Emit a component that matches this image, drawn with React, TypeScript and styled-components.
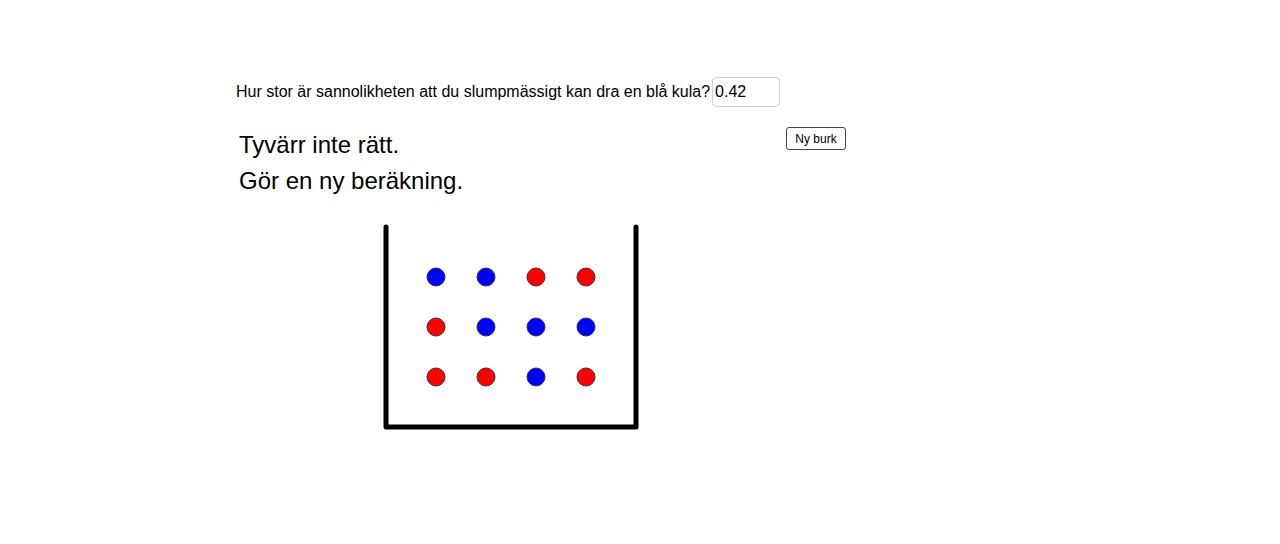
import React from 'react'
import styled, { createGlobalStyle } from 'styled-components'

const GlobalStyle = createGlobalStyle`
    html, body {
        margin: 0;
        padding: 0;
        background: white;
        font-family: "Liberation Sans", Arial, sans-serif;
    }
`

type Ball = 'blue' | 'red'

const balls: Ball[][] = [
    ['blue', 'blue', 'red', 'red'],
    ['red', 'blue', 'blue', 'blue'],
    ['red', 'red', 'blue', 'red']
]

const ballColors: Record<Ball, string> = {
    blue: '#0000ff',
    red: '#ff0000'
}

export default function App() {
    return (
        <Page>
            <GlobalStyle />
            <Canvas>
                <QuestionRow>
                    <Question>Hur stor är sannolikheten att du slumpmässigt kan dra en blå kula?</Question>
                    <AnswerInput defaultValue="0.42" />
                </QuestionRow>
                <FeedbackRow>
                    <Feedback>
                        <FeedbackLine>Tyvärr inte rätt.</FeedbackLine>
                        <FeedbackLine>Gör en ny beräkning.</FeedbackLine>
                    </Feedback>
                    <NewJarButton>Ny burk</NewJarButton>
                </FeedbackRow>
                <Jar width="265" height="215" viewBox="380 220 265 215">
                    <path
                        d="M386 227 L386 427 L636 427 L636 227"
                        fill="none"
                        stroke="#000"
                        strokeWidth="5"
                        strokeLinecap="round"
                        strokeLinejoin="round"
                    />
                    {balls.map((row, r) =>
                        row.map((color, c) => (
                            <circle
                                key={`${r}-${c}`}
                                cx={436 + c * 50}
                                cy={277 + r * 50}
                                r="9"
                                fill={ballColors[color]}
                                stroke="#333"
                                strokeWidth="1"
                            />
                        ))
                    )}
                </Jar>
            </Canvas>
        </Page>
    )
}

const Page = styled.div`
    width: 1280px;
    height: 544px;
    overflow: hidden;
    background: white;
`

const Canvas = styled.div`
    display: flex;
    flex-direction: column;
    align-items: flex-start;
    padding: 77px 0 0 236px;
`

const QuestionRow = styled.div`
    display: flex;
    align-items: center;
    gap: 2px;
`

const Question = styled.span`
    font-size: 16px;
    color: #000;
`

const AnswerInput = styled.input`
    box-sizing: border-box;
    width: 68px;
    height: 30px;
    padding: 0 2px;
    border: 1px solid #d0d0d0;
    border-radius: 5px;
    box-shadow: 0 0 1px rgba(0, 0, 0, 0.15);
    font-family: "Liberation Sans", Arial, sans-serif;
    font-size: 16px;
    color: #000;
    outline: none;
`

const FeedbackRow = styled.div`
    display: flex;
    align-items: flex-start;
    margin-top: 20px;
    padding-left: 3px;
`

const Feedback = styled.div`
    width: 547px;
    display: flex;
    flex-direction: column;
`

const FeedbackLine = styled.div`
    font-size: 24px;
    line-height: 36px;
    color: #000;
`

const NewJarButton = styled.button`
    box-sizing: border-box;
    width: 60px;
    height: 23px;
    padding: 0;
    background: white;
    border: 1px solid #444;
    border-radius: 3px;
    font-family: "Liberation Sans", Arial, sans-serif;
    font-size: 12px;
    color: #000;
`

const Jar = styled.svg`
    display: block;
    margin: 21px 0 0 144px;
`
